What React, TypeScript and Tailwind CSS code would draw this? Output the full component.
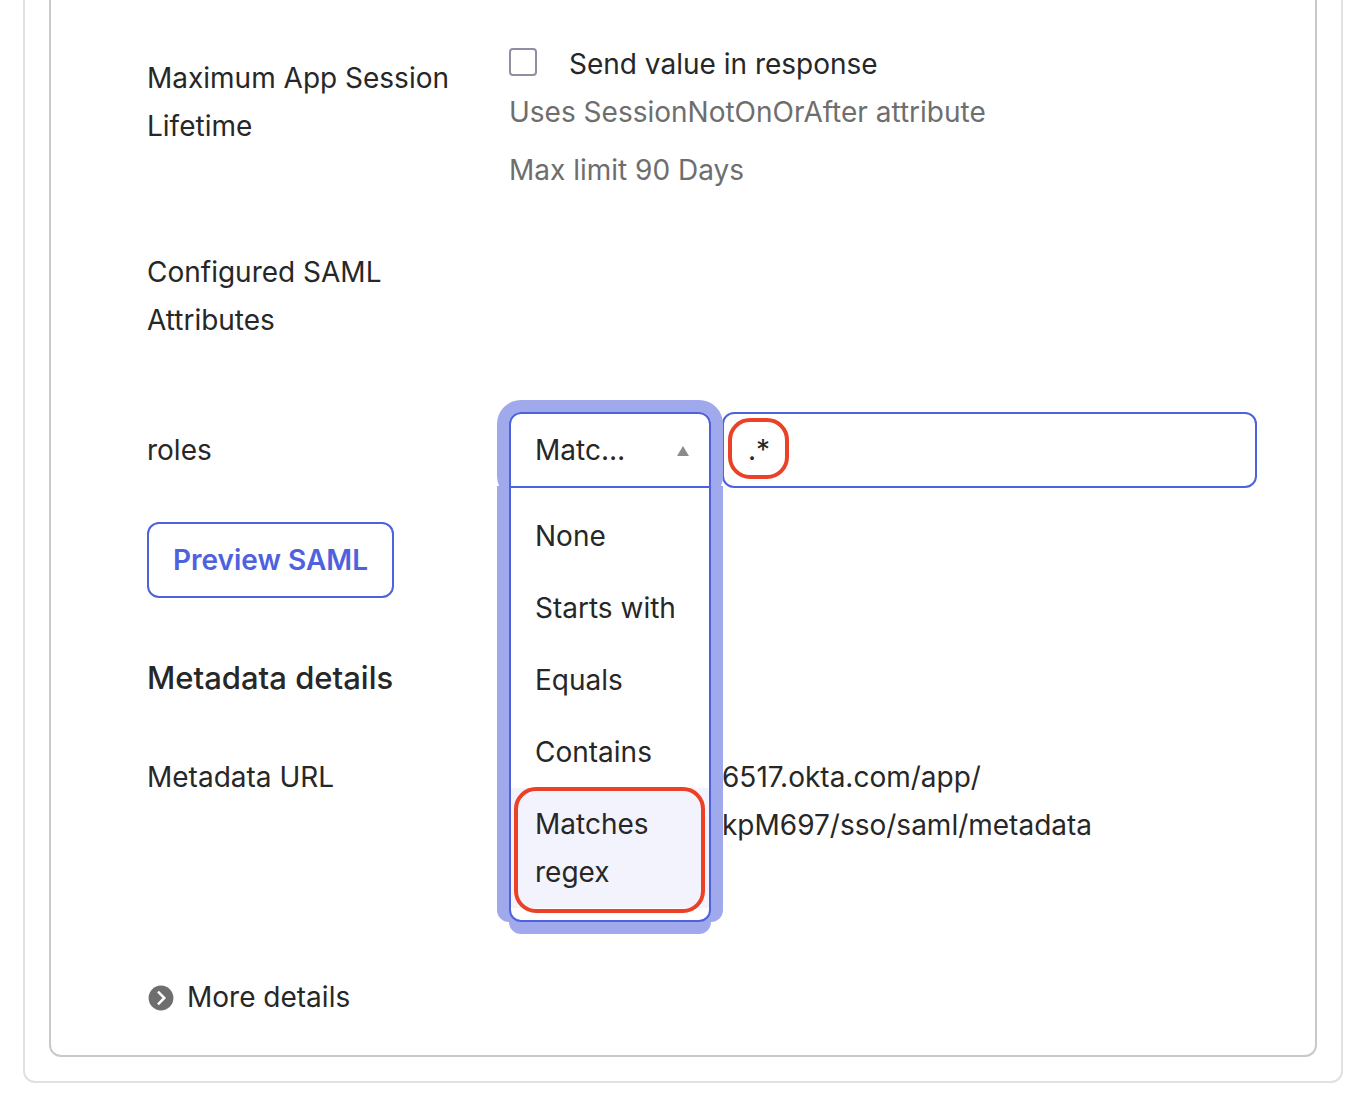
import type { ReactNode } from "react";

const OPTIONS = ["None", "Starts with", "Equals", "Contains", "Matches regex"];
const SELECTED = "Matches regex";

function Row({ label, className = "", children }: { label: ReactNode; className?: string; children?: ReactNode }) {
  return (
    <div className={`grid grid-cols-[314px_minmax(0,1fr)] gap-x-12 ${className}`}>
      {label}
      <div className="min-w-0">{children}</div>
    </div>
  );
}

function MatchSelect() {
  return (
    <div className="relative z-10 w-[202px] shrink-0 rounded-xl shadow-[0_0_0_12px_#a0a9ec]">
      <select
        id="roles-match"
        defaultValue={SELECTED}
        className="block h-[76px] w-full appearance-none overflow-hidden rounded-t-xl rounded-b-none border-2 border-[#4f62de] bg-white pr-[74px] pl-6 text-ellipsis whitespace-nowrap outline-none"
      >
        {OPTIONS.map((option) => (
          <option key={option}>{option}</option>
        ))}
      </select>
      <svg className="pointer-events-none absolute top-[34px] right-[22px] h-[10px] w-3" viewBox="0 0 12 10" aria-hidden="true">
        <path d="M6 0L12 10H0Z" fill="#8b8b8b" />
      </svg>
      <ul
        role="listbox"
        aria-label="Match type"
        className="absolute top-[74px] left-0 w-full rounded-b-xl border-2 border-[#4f62de] bg-white py-3 shadow-[-12px_0_0_#a0a9ec,12px_0_0_#a0a9ec,0_12px_0_#a0a9ec]"
      >
        {OPTIONS.map((option) => (
          <li
            key={option}
            role="option"
            aria-selected={option === SELECTED}
            className="relative px-6 py-3 aria-selected:bg-[#f3f3fd]"
          >
            {option}
            {option === SELECTED && (
              <span className="pointer-events-none absolute -top-px right-1 -bottom-[5px] left-[3px] rounded-[22px] border-4 border-[#ea4127]" />
            )}
          </li>
        ))}
      </ul>
    </div>
  );
}

export default function App() {
  return (
    <main className="bg-white pb-[29px] font-['Inter',sans-serif] text-[28px] leading-[48px] text-[#272727]">
      <div className="mr-[25px] ml-[23px] rounded-b-xl border-2 border-t-0 border-[#e1e1e1] px-6 pb-6">
        <div className="rounded-b-xl border-2 border-t-0 border-[#c9c9c9] pt-10 pr-[58px] pb-[34px] pl-24">
          <Row label={<div className="pt-[14px]">Maximum App Session Lifetime</div>}>
            <div className="flex items-start">
              <input
                id="send-value"
                type="checkbox"
                className="mt-2 size-7 shrink-0 appearance-none rounded border-2 border-[#918ea3] bg-white"
              />
              <label htmlFor="send-value" className="pl-8">
                Send value in response
              </label>
            </div>
            <p className="text-[#6e6e6e]">Uses SessionNotOnOrAfter attribute</p>
            <p className="mt-[10px] text-[#6e6e6e]">Max limit 90 Days</p>
          </Row>

          <Row className="mt-[54px]" label={<div>Configured SAML Attributes</div>} />

          <Row
            className="mt-[68px] items-center"
            label={<label htmlFor="roles-match">roles</label>}
          >
            <div className="flex gap-[11px]">
              <MatchSelect />
              <div className="relative min-w-0 flex-1">
                <input
                  type="text"
                  aria-label="roles value"
                  defaultValue=".*"
                  className="block h-[76px] w-full rounded-xl border-2 border-[#4f62de] bg-white px-6 outline-none"
                />
                <span className="pointer-events-none absolute top-[6px] left-[6px] size-[61px] rounded-[22px] border-4 border-[#ea4127]" />
              </div>
            </div>
          </Row>

          <button
            type="button"
            className="mt-[34px] block h-[76px] rounded-xl border-2 border-[#4f62de] bg-white px-6 font-semibold text-[#4f62de]"
          >
            Preview SAML
          </button>

          <h2 className="mt-14 text-[31px] font-medium">Metadata details</h2>

          <Row className="mt-[51px]" label={<div>Metadata URL</div>}>
            <p className="pl-[213px]">
              6517.okta.com/app/
              <br />
              kpM697/sso/saml/metadata
            </p>
          </Row>

          <button type="button" className="mt-[124px] flex items-center gap-3">
            <svg className="size-7" viewBox="0 0 28 28" aria-hidden="true">
              <circle cx="14" cy="15" r="12.4" fill="#6e6e6e" />
              <path d="M11 8.6L17.3 15L11 21.4" fill="none" stroke="#fff" strokeWidth="2.5" />
            </svg>
            More details
          </button>
        </div>
      </div>
    </main>
  );
}
